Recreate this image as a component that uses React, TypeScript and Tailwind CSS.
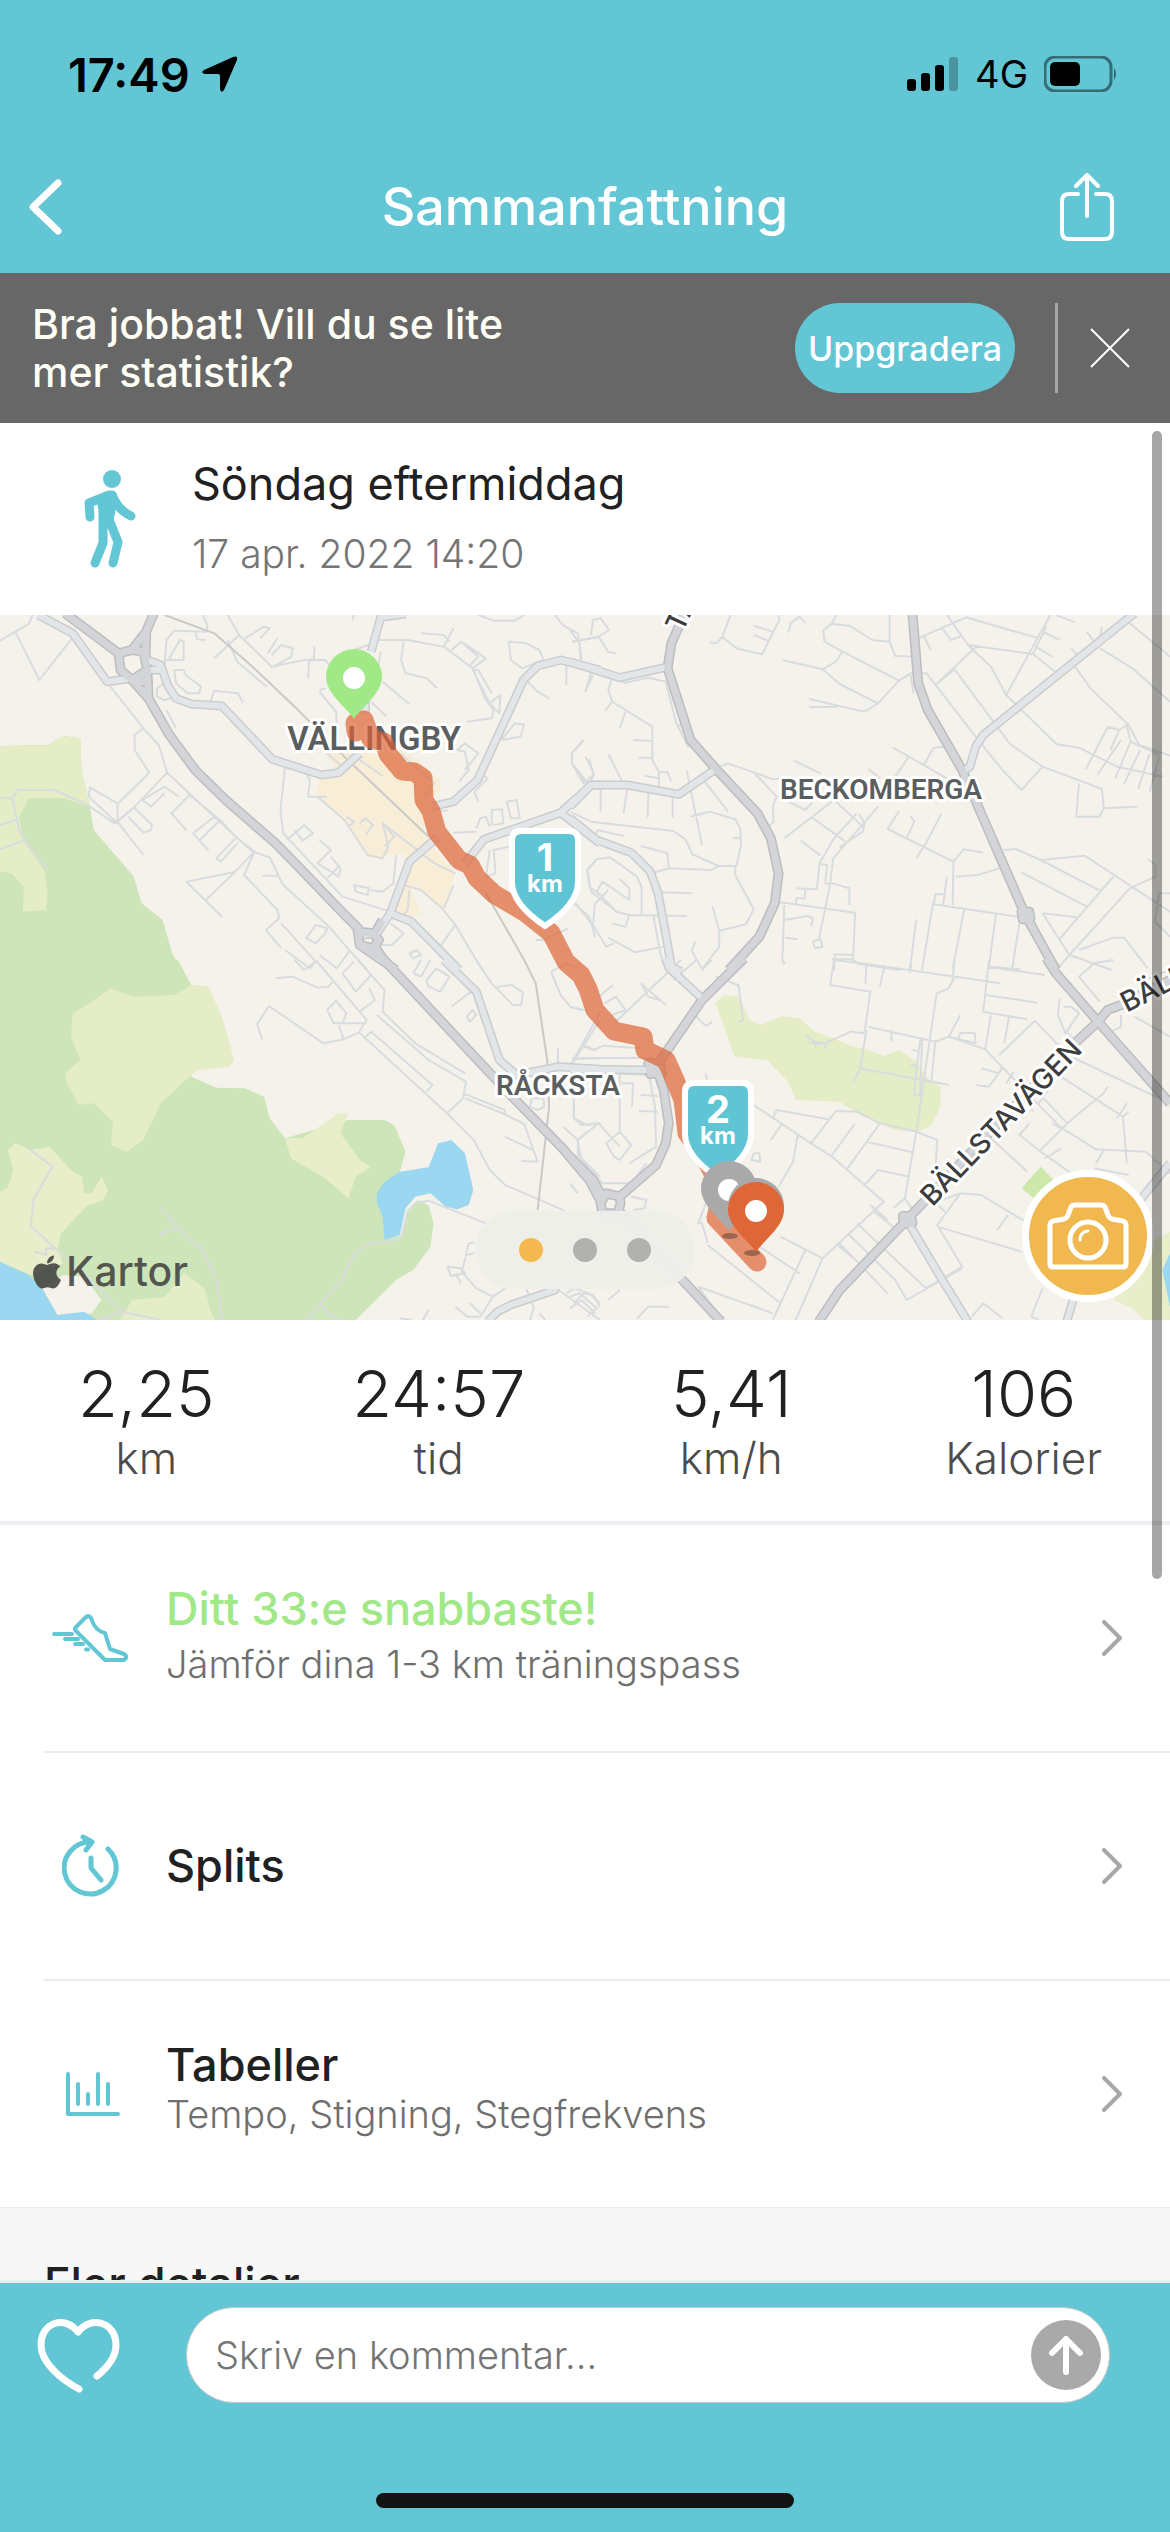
import type { ReactNode } from 'react'
import { FaApple } from 'react-icons/fa'

const MINOR = '#d9dcde'

interface Tile {
  x: number
  y: number
  minor: string
  light: string
  major: string
}

// Roads, one entry per map tile. Tile units: 1568 wide, 3 per map unit high
const TILES: Tile[] = [
  {
    x: 0,
    y: -5,
    minor:
      'M85 15L75 42L40 65L0 92 M40 65L103 210L188 85 M285 225L375 355L415 405L437 488L560 620L660 725L705 742L740 825L860 950L920 1030L960 1080 M375 355L352 375L352 420L390 488L307 582L307 640L232 560L235 532L307 580 M437 488L350 592L307 635L375 735 M0 565L32 565L47 540L140 540L225 582L300 640L350 592L397 645L395 660L375 668L335 620 M32 565L50 660L65 690L122 778 M0 645L42 630 M0 718L65 690 M372 570L430 530L467 560 M372 570L395 590L430 550 M495 555L448 610L487 660 M495 555L575 630L620 685L665 725L615 785L487 815L580 920 M560 620L505 670L545 722 M575 630L522 690 M615 685L565 745L577 755L620 700 M665 725L638 795L725 900L730 925L695 960L735 1015 M735 940L825 1055L810 1075L745 1020 M538 870L615 785 M685 797L730 797 M745 470L733 600L740 670L895 860L1020 905 M750 690L795 645L818 670L790 692L770 660 M835 690L865 720L830 760L885 800L890 775L865 740 M855 805L885 770 M925 825L965 835L960 855L930 845Z M1035 735L1028 820L1000 845L970 840 M430 165L435 90L455 62L540 65L542 45L530 15 M430 150L480 150L480 95L470 90L440 150 M455 180L480 180L485 195L525 230L520 250L490 250L460 220Z M410 260L430 270L455 262L430 220L410 235Z M435 300L460 355 M550 275L560 242L622 250L635 278 M595 15L625 75L560 145 M625 75L710 170L795 150L850 150L865 170 M680 85L705 55L690 50L640 85 M700 130L725 85 M710 135L735 105L765 115L762 140L715 170 M805 205L808 150L820 145L822 110 M595 90L620 155L697 230 M510 65L515 88L537 90 M835 240L850 235 M835 245L878 305L880 340 M925 120L975 100L990 90L1065 90L1160 110L1235 175L1270 270L1290 300L1285 325L1220 335 M1055 95L1048 150L1060 190L1115 205L1142 235 M1100 70L1160 75L1175 95 M1185 55L1160 110 M1180 120L1205 95L1250 140L1225 170 M1205 95L1270 145L1235 175 M1235 180L1250 180L1285 250 M1240 190L1280 280L1308 255L1305 310L1270 270 M1000 215L1070 283 M970 275L1010 320 M995 125L988 175 M920 30L925 15 M1250 15L1290 32L1345 32L1370 15 M1330 95L1375 100L1410 120L1420 150L1365 175L1335 150Z M1450 15L1470 45L1510 70L1520 150 M1495 95L1568 80 M1375 210L1405 245L1435 265 M1480 155L1480 225 M1545 185L1530 245 M1310 390L1345 340L1370 345L1360 380L1310 390 M1200 515L1225 480L1215 425L1195 420L1215 400L1250 430L1215 480 M1240 545L1275 505L1250 490 M1240 545L1250 575 M1525 390L1495 430L1495 460L1540 525L1552 490L1530 440 M1245 655L1255 625L1270 620L1280 650 M1285 645L1285 600L1312 598L1315 640L1290 645 M1325 575L1350 570L1358 625L1335 625Z M1145 590L1155 605L1170 600 M1185 668L1245 665 M1280 720L1270 800L1295 790L1290 720L1330 710 M1560 745L1535 780L1540 830L1568 855 M1500 880L1540 920L1555 980 M1055 825L1100 840L1155 895L1190 945L1260 1080 M1185 825L1160 895 M1070 840L1065 900L1055 915 M1190 945L1150 1010L1170 1035 M800 490L810 510L805 560L855 560 M830 560L900 630L960 735L1000 745L1015 710L1000 640L1030 680L1005 710 M940 640L955 625L975 645L955 675 M905 620L925 635L910 650 M940 450L1000 498 M855 430L905 480 M1045 430L1135 520L1110 560 M1000 640L1135 760L1190 790 M1020 940L1055 970L1025 1005L990 1005 M800 985L825 945L855 955L850 970L825 1000Z M1070 1030L1090 1020L1100 1035L1080 1045Z M1400 990L1420 990L1485 955 M835 1035L880 1075L915 1020',
    light:
      'M100 15L190 70L280 215L345 205 M385 150L420 165L440 230L460 265L500 282L580 288L712 448L840 495L885 488L940 430 M1060 12L995 22L970 125 M955 250L955 310 M1568 180L1466 150L1405 168L1368 210L1248 510L1185 575L1130 590 M1568 525L1545 525L1465 608L1265 688L1215 760 M1465 608L1568 700 M1145 680L1070 755L1020 910L985 970L950 975 M1020 910L1075 935L1200 1080 M385 180L430 180',
    major:
      'M170 10L310 130L345 120L375 125L385 180L345 210L315 180L310 130 M402 10L382 65L380 150L385 180L375 215L345 210 M382 65L345 120 M345 210L388 265L440 370L510 480L590 570L720 700L780 770L880 890L940 960 M385 180L388 265 M935 965L975 970L990 990L975 1015L940 1005Z M980 970L1000 930 M940 1005L1035 1080 M980 1010L1000 1045',
  },
  {
    x: 570,
    y: -5,
    minor:
      'M0 60L25 100L28 150 M5 95L75 80L102 60L80 25L60 30L55 75 M75 80L100 125L120 130 M60 195L40 245 M110 205L100 240L110 275L215 350L215 450L232 485L232 535 M165 390L215 393 M180 443L215 443 M195 497L232 505 M232 485L255 487L265 515 M145 305L130 355 M110 275L92 302 M250 215L205 203L145 218L135 215 M250 215L278 340L310 412 M278 345L295 348 M35 390L5 430L5 460L40 520 M5 460L35 520L62 495L50 447 M100 432L135 510 M80 533L80 605 M150 533L140 610 M205 545L203 622 M268 560L268 625 M305 482L345 705 M352 515L413 605 M420 15L398 80L383 100L365 97 M398 80L435 115L502 133L547 30L545 15 M480 47L530 65 M480 75L520 93 M570 68L578 38L600 20L615 38 M695 15L685 40L662 62L665 95L712 125L860 212 M685 42L730 47L790 90L835 95 M835 15L835 95L850 138L900 140 M712 125L695 155L660 178L555 150 M660 178L705 222L805 280L770 305L625 267 M625 292L700 290 M805 280L860 212L890 190L932 190L1060 380L1130 480L1180 540L1235 470L1150 402L1005 178L958 222 M1060 112L955 225 M890 195L898 250 M910 85L1035 22L1225 85 M985 15L1040 105L1100 170L1140 255L1255 15 M1040 105L1210 132L1268 185 M1210 132L1245 50 M970 50L995 90L1020 80 M925 80L943 120 M1140 255L1272 403L1330 413L1430 470L1550 500 M1235 470L1390 537L1395 595L1482 590 M1395 595L1383 620L1323 620L1330 520 M1235 65L1280 90 M1215 108L1260 140 M1270 15L1320 37 M1455 32L1568 140 M1385 115L1470 175L1568 275 M1320 170L1360 235L1460 345L1487 405L1568 437 M1310 115L1325 135 M1350 65L1370 95 M1390 50L1385 80 M1405 352L1348 478 M1405 350L1435 360L1455 345L1465 395L1540 435 M1435 362L1412 420 M1465 395L1425 505 M1440 390L1378 495 M1490 420L1448 522 M1515 430L1485 537 M1540 440L1515 545 M380 475L413 460L480 487L530 508L560 505 M585 452L655 490 M480 487L540 560L530 590L532 635L515 655 M570 575L615 600L635 575 M560 685L690 570L770 655 M632 622L720 695 M805 590L688 745L680 818L730 835L730 885 M690 685L652 760L645 838L590 835 M652 762L672 765L667 820L680 822L652 980L660 1010L640 1015L635 995L655 985 M748 612L690 685 M755 612L770 640L765 665L705 712 M603 692L655 737 M843 412L985 505L1010 545 M885 440L850 500 M925 465L950 413L980 410 M780 477L810 505 M970 612L935 690L905 745 M860 603L830 657L1002 755L1000 885 M880 683L900 635L890 618 M1002 755L1028 718L1080 728 M1008 800L1065 795L1130 772 M985 800L975 885 M950 885L955 853L978 853 M945 882L1180 922 M1133 720L1165 717L1230 750L1345 737L1568 905 M1230 750L1390 845 M1180 787L1350 890 M1420 800L1277 990 M1463 835L1305 1035L1415 1080 M1235 910L1325 922 M1235 910L1305 1035L1275 1075 M1330 1020L1420 983L1448 983L1510 1075 M1510 747L1530 765L1530 800L1463 835 M1568 850L1540 850L1528 935L1568 980 M1030 900L1000 1075 M1113 912L1095 1070L1175 1078 M1175 935L1155 1080 M948 885L920 1080 M905 928L888 1080 M540 875L745 908L740 1048 M560 885L555 1050L562 1062 M562 930L620 918L635 925L630 948 M562 983L595 988 M690 1080L692 1033L740 1035 M685 1048L735 1048L755 1062L860 1080 M590 880L592 865L613 865L615 838 M0 605L55 635L270 663L302 688L320 733L388 768L435 768L447 705L445 655L432 628L365 605L315 620 M388 768L370 780L258 775L215 790 M185 708L255 730L258 775 M432 768L432 795L480 898L460 943L390 962L372 888 M390 962L390 1010L345 1078L318 1022L328 995 M235 847L320 850 M140 678L72 660L62 690 M70 748L45 780L55 845L122 905L155 915L305 918 M70 748L105 742L175 800L187 830L187 912 M122 905L70 845L85 815L155 870L155 835L130 807 M100 840L65 882L60 945L95 1010L115 1000 M155 915L145 950L110 940 M15 880L55 940 M218 918L235 1025L250 1080 M245 1010L170 1027L100 983 M425 685L445 685',
    light:
      'M0 155L130 203L250 172 M0 590L55 525L150 525L285 553L380 478 M0 625L70 690L160 728L210 785L230 850L250 970L265 1070L290 1085 M1475 10L1080 375L1060 410L1045 470L1025 485',
    major:
      'M300 10L265 100L255 175L315 390L380 475L490 610L525 685L545 790L535 880L495 980L415 1080 M895 10L910 220L935 300L1025 480L1190 915L1270 1080 M1180 905L1200 905L1203 925L1183 928Z',
  },
  {
    x: 0,
    y: 345,
    minor:
      'M825 0L958 180L938 217L1168 460L1238 540L1280 630L1320 675L1475 752 M770 0L795 30L825 5 M720 55L765 50L830 83L858 80L872 62 M895 40L930 95L970 45L935 0 M895 40L925 5 M970 45L1005 90L1000 155L1085 250L1215 340 M965 85L980 120L940 155 M855 150L878 122L905 160L895 190L872 190Z M872 190L958 190 M885 195L898 238L845 250L703 138L672 192L685 238 M938 217L898 238 M985 165L1120 300L1218 365L1210 415L1168 460 M950 235L970 215L1130 375L1115 395 M1210 400L1320 450L1318 462L1215 415 M1318 462L1370 492L1405 605L1362 603 M1320 530L1392 570 M1080 40L1100 0 M1080 40L1100 50L1125 0 M1115 60L1140 25L1175 50L1150 95L1120 80Z M1180 140L1230 95 M1220 105L1235 95 M1220 170L1235 150L1245 165L1228 185Z M1290 225L1305 280 M1245 0L1285 70L1340 135L1362 135L1367 98L1338 75L1300 80 M1458 265L1458 315 M1490 320L1568 180 M1500 297L1568 295 M1525 260L1550 270L1568 262 M1390 415L1385 440L1405 450L1422 440L1420 415Z M1500 415L1500 475L1535 495L1568 490 M1472 500L1510 540L1510 585L1568 650 M1535 515L1510 540 M1120 722L1088 728L1065 755L1050 828L1025 845L970 850L925 880L890 965L800 1080 M838 1030L855 1060L890 1078 M1120 722L1270 790 M418 745L465 802L500 845L525 862L565 960L578 1065L585 1080 M418 822L465 802 M80 570L137 620L88 718L80 798L225 950L320 1055L420 1080 M90 875L120 885L120 865L140 865 M320 1055L255 1080 M1240 848L1225 850L1217 885L1240 880 M1217 890L1207 935L1245 985L1288 1010L1320 985 M1170 920L1205 925L1215 940L1178 948Z M1190 940L1205 970 M1190 1040L1222 1070L1255 1070L1288 1010 M1228 1030L1255 1060 M1120 1050L1105 1080 M1045 1075L1075 1080 M1375 985L1395 1045L1385 1080 M1460 990L1568 1080 M1480 1000L1500 985L1540 1000L1568 1030 M1500 1030L1525 1000L1550 1005L1568 1040 M1410 1060L1425 1080 M1440 35L1480 10L1500 20 M1440 35L1465 105L1490 140L1535 152',
    light:
      'M1160 0L1245 95L1305 300L1350 345L1460 320L1568 328 M1275 1085L1300 1055L1335 1035L1450 990L1455 970',
    major: 'M1000 -5L1240 290L1330 400L1470 565L1540 660L1568 720',
  },
  {
    x: 570,
    y: 345,
    minor:
      'M0 318L80 155 M5 295L215 293 M40 258L65 270L85 257L185 265 M75 110L112 75 M90 130L120 110L145 150L110 165 M115 190L290 0 M185 70L250 135 M185 70L205 110L235 120 M330 0L270 60 M345 30L370 0 M380 50L440 75L453 180L440 185 M350 120L325 165L355 198L372 185 M355 340L358 365 M480 435L630 550L685 590L820 725L660 895L550 830 M530 475L540 450L675 478 M555 490L525 540 M595 525L583 605L545 680 M630 550L695 453L750 455L805 488L905 515L960 540L955 620 M745 490L685 585 M810 490L725 625 M775 545L900 578 M770 675L805 630L885 650 M905 515L875 715L905 765 M875 715L845 745 M615 225L640 245L665 250L735 215L770 220 M620 248L665 250 M642 250L642 268 M665 250L670 268 M780 200L955 245L990 230L1085 268L1280 500L1375 568 M770 215L785 95L680 75L690 0 M775 210L758 325L990 375 M740 365L758 328 M990 375L905 355 M915 240L898 405L915 405L920 240 M955 240L945 360 M690 0L775 12L1125 70 M775 10L772 72 M822 15L810 80 M887 40L893 10 M1000 55L1005 0 M1005 50L990 85L958 100L905 515 M1090 20L1240 45 M1095 0L1080 155L1195 178 M1085 105L1222 128 M1100 165L1085 268 M1148 165L1135 250 M1215 182L1122 285 M1215 182L1300 285 M1020 165L990 230L1060 250L1058 220L1020 218L1015 235 M895 270L910 272 M890 315L910 318 M840 210L840 245 M1075 325L1120 340L1130 320 M1060 375L1095 380L1130 325 M1160 335L1140 370 M1170 350L1210 455 M1200 370L1300 490L1225 575 M1300 285L1535 412 M1225 335L1290 355L1445 470L1455 610 M1250 390L1225 430 M1300 490L1330 460L1395 400 M1395 400L1405 380 M1285 505L1260 490 M1240 595L1285 565 M1455 430L1430 475 M1200 490L1175 525L1230 575L1310 640 M1100 535L1195 635 M1375 568L1505 575L1568 640 M1395 570L1375 610 M1370 625L1460 645 M1460 455L1445 470 M1280 115L1275 165L1295 220L1330 160L1310 140L1290 140 M1300 220L1315 235 M1385 125L1330 50L1370 10L1420 0 M1440 165L1440 200L1405 220 M1475 170L1568 230 M1568 30L1500 60L1480 50 M950 730L1020 700L1075 705L1190 785 M1020 700L960 795L1025 920L930 985L750 790 M1145 765L1115 812 M960 800L1180 875 M980 755L940 715 M790 750L860 815 M785 735L830 780 M700 855L740 895 M705 850L830 1000 M730 825L850 960L880 1020L1025 925 M360 850L345 790L335 790L365 700 M360 855L550 1030 M495 860L600 940 M615 870L530 1080 M660 895L590 1080 M335 980L530 1060 M335 980L395 1075 M480 580L495 580L497 605L475 600L480 580 M10 415L10 475L30 495L75 490L130 560 M130 340L130 515 M130 340L200 345 M135 370L165 370L162 440 M185 405L230 408 M180 453L230 455 M205 335L222 440L225 560L155 610 M75 490L20 540L30 600L85 670L160 670L200 610 M130 515L95 550L115 590L130 600L160 555L130 515 M160 710L200 720L195 745L165 750 M175 1075L205 1040L260 1040 M0 1010L25 1000L70 1045L45 1070 M0 1045L30 1020L65 1060 M100 1020L130 990 M1080 1030L1050 1070 M1080 1030L1130 1075 M1205 1070L1235 985 M1205 1070L1225 1080 M555 0L560 12 M0 140L30 150 M20 700L0 670',
    light:
      'M250 -5L260 25L345 115 M0 328L215 330 M880 780L960 935L1040 1085 M1298 1085L1320 1000 M1568 610L1490 720',
    major:
      'M455 -5L345 120L225 320L245 390L258 490L250 550L225 615L130 710 M205 310L235 310L240 340L210 342Z M0 590L60 660L85 710 M130 710L95 700L80 730L85 760L125 760L132 730Z M125 750L290 955L395 1085 M1245 -5L1270 40L1380 185L1568 430 M1568 60L1440 135L1405 150L1380 185L1310 260L880 780L705 990L650 1085 M870 768L890 768L895 790L872 792Z',
  },
]

const AREAS = [
  { x: 0, y: -5, fill: '#cde5b8', pts: '0,408 125,405 165,378 210,385 213,480 235,590 245,660 350,800 370,880 425,930 450,1030 475,1085 0,1085' },
  { x: 0, y: -5, fill: '#e4edc6', pts: '0,408 125,405 165,378 210,385 213,480 235,590 165,565 75,565 50,620 60,690 115,780 125,850 120,900 60,905 62,830 30,790 0,785' },
  { x: 0, y: -5, fill: '#f8eed8', pts: '850,430 890,400 960,395 1065,425 1155,515 1150,545 1110,570 1110,680 1190,790 1160,895 1130,870 1070,825 1100,910 1070,925 1030,900 1060,790 1055,730 1010,735 1000,750 960,735 910,640 825,560 835,510 890,495' },
  { x: 0, y: 345, fill: '#cde5b8', pts: '0,0 465,0 500,75 545,80 500,350 565,383 640,385 690,410 705,475 745,535 910,480 1005,480 1030,495 1060,575 1045,635 1005,840 1050,825 1065,750 1090,720 1120,735 1133,790 1125,860 1080,930 1035,960 925,1085 0,1085' },
  { x: 0, y: 345, fill: '#e4edc6', pts: '500,75 455,105 345,110 290,85 220,140 190,160 185,230 210,300 170,340 175,370 205,435 245,430 295,485 290,555 330,575 375,540 420,430 500,345 520,330 600,320 612,300 580,170 545,80' },
  { x: 0, y: 345, fill: '#e8edca', pts: '745,535 790,535 885,460 910,460 890,520 940,600 970,620 930,650 910,715 850,655 760,595' },
  { x: 0, y: 345, fill: '#e8edca', pts: '0,695 20,685 35,630 20,570 40,550 80,570 130,560 190,635 215,650 220,700 240,700 265,650 283,690 270,720 225,740 160,820 150,870 165,910 80,945 0,905' },
  { x: 0, y: 345, fill: '#e4edc6', pts: '310,1085 345,1020 430,1010 480,940 535,985 550,1050 565,1085' },
  { x: 0, y: 345, fill: '#f5f2eb', pts: '110,985 165,945 220,950 265,1020 240,1060 150,1065' },
  { x: 0, y: 345, fill: '#9bd7f1', pts: '0,905 75,945 110,985 150,1065 220,1055 260,1085 0,1085' },
  { x: 0, y: 345, fill: '#9bd7f1', pts: '1045,635 1120,622 1145,550 1180,540 1215,580 1237,690 1225,735 1195,748 1165,740 1125,700 1085,710 1060,745 1045,825 1005,840 1000,770 985,730 985,700 1005,665' },
  { x: 570, y: 345, fill: '#e4edc6', pts: '380,130 405,105 440,110 470,180 500,195 555,168 600,175 640,215 700,240 740,260 770,265 820,288 860,270 905,305 935,355 968,380 968,440 945,495 910,515 850,510 750,460 705,425 590,420 570,365 515,300 430,290 415,240' },
  { x: 570, y: 345, fill: '#cce8ab', pts: '1180,685 1230,620 1290,690 1240,740' },
  { x: 570, y: 345, fill: '#e8edca', pts: '1420,1020 1515,850 1568,815 1568,1085 1505,1085 1470,1045' },
  { x: 570, y: 345, fill: '#9bd7f1', pts: '1568,880 1548,930 1568,1040' },
]

const ROUTE =
  'M356 117L355 108L364 105L371 124L384 127L388 139L402 156L414 157L423 163L424 185L431 196L437 217L459 245L470 250L477 263L494 279L526 298L551 318L566 347L581 360L588 374L595 395L614 416L643 422L645 435L666 445L675 465L683 485L687 518L706 545L722 575L716 603L757 647'

const toMap = (x: number, y: number) => `translate(${x} ${y}) scale(0.38265 0.33333)`

function Line({ d, color, width }: { d: string; color: string; width: number }) {
  return (
    <path
      d={d}
      fill="none"
      stroke={color}
      strokeWidth={width}
      strokeLinejoin="round"
      vectorEffect="non-scaling-stroke"
    />
  )
}

function Pin({ x, y, color }: { x: number; y: number; color: string }) {
  return (
    <g transform={`translate(${x} ${y})`}>
      <path d="M0 0C-5 -9 -28 -25 -28 -42A28 28 0 0 1 28 -42C28 -25 5 -9 0 0Z" fill={color} />
      <circle cy="-41" r="11" fill="#fff" />
    </g>
  )
}

function KmShield({ x, y, km }: { x: number; y: number; km: number }) {
  return (
    <g transform={`translate(${x} ${y})`}>
      <path
        d="M-24 3H24Q33 3 33 12V54C33 74 12 90 0 98C-12 90 -33 74 -33 54V12Q-33 3 -24 3Z"
        fill="#5fc5d5"
        stroke="#fff"
        strokeWidth="6"
      />
      <text y="43" textAnchor="middle" fill="#fff" className="font-['Inter',sans-serif] text-[38px] font-bold">
        {km}
      </text>
      <text y="64" textAnchor="middle" fill="#fff" className="font-['Inter',sans-serif] text-[24px] font-bold">
        km
      </text>
    </g>
  )
}

function RouteMap() {
  const label = "font-['Roboto',sans-serif] font-semibold"
  return (
    <svg viewBox="0 0 1170 705" className="block w-full" role="img" aria-label="Karta">
      <rect width="1170" height="705" fill="#f5f2eb" />
      {AREAS.map((a, i) => (
        <polygon key={i} points={a.pts} fill={a.fill} transform={toMap(a.x, a.y)} />
      ))}
      {TILES.map((t, i) => (
        <g key={i} transform={toMap(t.x, t.y)}>
          <Line d={t.minor} color={MINOR} width={2} />
        </g>
      ))}
      <g transform={toMap(0, -5)}>
        <Line
          d="M430 15L560 70L660 170L770 290L900 440L1120 680 M1270 850L1310 930L1370 1050L1400 1120L1430 1350L1435 1490L1405 1800"
          color="#c9c9c8"
          width={2}
        />
      </g>
      {TILES.map((t, i) => (
        <g key={i} transform={toMap(t.x, t.y)}>
          <Line d={t.light} color="#cbccce" width={9} />
        </g>
      ))}
      {TILES.map((t, i) => (
        <g key={i} transform={toMap(t.x, t.y)}>
          <Line d={t.major} color="#bcbdbf" width={10} />
        </g>
      ))}
      {TILES.map((t, i) => (
        <g key={i} transform={toMap(t.x, t.y)}>
          <Line d={t.light} color="#e3e6e9" width={6} />
          <Line d={t.major} color="#d3d5d8" width={7} />
        </g>
      ))}

      <g stroke="#fff" strokeWidth="6" strokeLinejoin="round" paintOrder="stroke" textAnchor="middle">
        <g fill="#5b5e5f">
          <text x="374" y="135" className={`${label} text-[33px]`}>VÄLLINGBY</text>
          <text x="881" y="184" className={`${label} text-[28px]`}>BECKOMBERGA</text>
          <text x="558" y="480" className={`${label} text-[28px]`}>RÅCKSTA</text>
        </g>
        <g fill="#3d3d3d" className="font-['Inter',sans-serif] text-[28px] font-medium">
          <text transform="translate(1008 514) rotate(-46)">BÄLLSTAVÄGEN</text>
          <text transform="translate(1158 382) rotate(-27)">BÄLL</text>
          <text transform="translate(690 2) rotate(-65)">TÄ</text>
        </g>
      </g>

      <path
        d={ROUTE}
        fill="none"
        stroke="#dd6436"
        strokeOpacity="0.7"
        strokeWidth="19"
        strokeLinecap="round"
        strokeLinejoin="round"
      />
      <KmShield x={545} y={213} km={1} />
      <KmShield x={718} y={465} km={2} />
      <g fill="#6b4a3c" opacity="0.6">
        <ellipse cx="730" cy="621" rx="8" ry="3" />
        <ellipse cx="752" cy="638" rx="8" ry="3" />
      </g>
      <Pin x={354} y={104} color="#a1e887" />
      <Pin x={729} y={616} color="#a9a9a9" />
      <Pin x={756} y={633} color="#a9a9a9" />
      <Pin x={756} y={637} color="#df6637" />
    </svg>
  )
}

function StatusBar() {
  return (
    <div className="flex h-[148px] items-center justify-between pr-13 pl-17 font-['Inter',sans-serif] text-black">
      <div className="flex items-center gap-3">
        <span className="text-[47px] leading-none font-semibold">17:49</span>
        <svg width="36" height="36" viewBox="0 0 36 36" aria-hidden="true">
          <path d="M31 1Q36 -1 35 4L22 34Q19 38 18 33V20Q18 18 16 18H3Q-2 17 2 14Z" />
        </svg>
      </div>
      <div className="flex items-center gap-4">
        <svg width="52" height="34" viewBox="0 0 52 34" aria-hidden="true">
          <rect y="22" width="9" height="12" rx="3" />
          <rect x="14" y="16" width="9" height="18" rx="3" />
          <rect x="28" y="8" width="9" height="26" rx="3" />
          <rect x="42" width="9" height="34" rx="3" opacity="0.25" />
        </svg>
        <span className="text-[38px] leading-none">4G</span>
        <svg width="74" height="36" viewBox="0 0 74 36" aria-hidden="true">
          <rect x="1" y="1" width="66" height="34" rx="10" fill="none" stroke="#000" strokeOpacity="0.45" strokeWidth="3" />
          <rect x="6" y="6" width="30" height="24" rx="5" />
          <path d="M70 12Q74 18 70 24Z" opacity="0.5" />
        </svg>
      </div>
    </div>
  )
}

const ShoeIcon = () => (
  <svg width="76" height="48" viewBox="0 0 76 48" fill="none" stroke="#62c6d5" strokeWidth="4" strokeLinecap="round" strokeLinejoin="round">
    <path d="M24 13L34 3Q37 1 39 4Q43 17 53 19L58 35L72 40Q75 42 74 44L72 46H53L24 17Q22 15 24 13Z" />
    <path d="M2 20H20 M13 25H26 M23 30H31 M34 35.500H36" />
  </svg>
)

const SplitsIcon = () => (
  <svg width="58" height="64" viewBox="0 0 58 64" fill="none" stroke="#62c6d5" strokeWidth="5" strokeLinecap="round" strokeLinejoin="round">
    <path d="M46 15A26 26 0 1 1 30 8M21 3L30 8L24 16M29 24V34L39 46" />
  </svg>
)

const ChartIcon = () => (
  <svg width="54" height="44" viewBox="0 0 54 44" fill="none" stroke="#62c6d5" strokeWidth="4" strokeLinecap="round" strokeLinejoin="round">
    <path d="M2 2V42H52M12 12V32M22 22V32M32 2V32M42 12V32" />
  </svg>
)

function WalkIcon() {
  return (
    <svg width="52" height="98" viewBox="0 0 52 98" fill="none" stroke="#62c6d5" strokeLinecap="round" strokeLinejoin="round" aria-hidden="true">
      <circle cx="28" cy="9" r="9" fill="#62c6d5" stroke="none" />
      <path d="M14 31Q22 18 32 24Q32 35 29 48L17 50Z" fill="#62c6d5" strokeWidth="2" />
      <path d="M25 25L5 33L6 47M28 25Q34 40 47 46" strokeWidth="9" />
      <path d="M19 42V73L11 93M22 42L34 72L29 93" strokeWidth="9" />
    </svg>
  )
}

const Chevron = () => (
  <svg width="20" height="36" viewBox="0 0 20 36" fill="none" stroke="#a8a8a8" strokeWidth="4" strokeLinecap="round" strokeLinejoin="round" aria-hidden="true">
    <path d="M2 2L18 18L2 34" />
  </svg>
)

interface RowProps {
  icon: ReactNode
  title: string
  sub?: string
  highlight?: boolean
}

function Row({ icon, title, sub, highlight }: RowProps) {
  return (
    <li className="border-b-2 border-[#ececec] last:border-b-0">
      <a href="#" className="flex h-[226px] items-center pr-12">
        <span className="flex w-[122px] shrink-0 justify-start">{icon}</span>
        <span className={`flex flex-1 flex-col ${sub ? 'pb-2' : ''}`}>
          <span
            className={`text-[45px] font-medium ${highlight ? 'leading-[60px] text-[#a1e887]' : 'leading-[48px] text-[#212121]'}`}
          >
            {title}
          </span>
          {sub && <span className="text-[38px] leading-[50px] font-light text-[#6f6f6f]">{sub}</span>}
        </span>
        <Chevron />
      </a>
    </li>
  )
}

const STATS = [
  { value: '2,25', unit: 'km' },
  { value: '24:57', unit: 'tid' },
  { value: '5,41', unit: 'km/h' },
  { value: '106', unit: 'Kalorier' },
]

export default function App() {
  return (
    <div className="flex h-screen flex-col bg-white font-['Inter',sans-serif] text-[#212121]">
      <header className="shrink-0 bg-[#62c6d5] text-white">
        <StatusBar />
        <div className="flex h-[125px] items-center justify-between pr-14 pb-2 pl-7">
          <button aria-label="Tillbaka" className="flex w-[82px]">
            <svg width="34" height="56" viewBox="0 0 34 56" fill="none" stroke="currentColor" strokeWidth="7" strokeLinecap="round" strokeLinejoin="round">
              <path d="M30 4L5 28L30 52" />
            </svg>
          </button>
          <h1 className="text-[52px] leading-none font-medium">Sammanfattning</h1>
          <button aria-label="Dela">
            <svg width="54" height="68" viewBox="0 0 54 68" fill="none" stroke="currentColor" strokeWidth="4" strokeLinecap="round" strokeLinejoin="round">
              <path d="M18 21H9Q2 21 2 28V59Q2 66 9 66H45Q52 66 52 59V28Q52 21 45 21H36M27 43V3M16 13L27 2L38 13" />
            </svg>
          </button>
        </div>
      </header>

      <section className="flex h-[150px] shrink-0 items-center bg-[#676767] pr-10 pl-8 text-[#fffff5]">
        <p className="w-[510px] text-[41px] leading-[48px] font-medium">Bra jobbat! Vill du se lite mer statistik?</p>
        <button className="ml-auto h-[90px] w-[220px] rounded-full bg-[#62c6d5] text-[34px] font-medium text-white">
          Uppgradera
        </button>
        <span className="ml-10 h-[90px] w-[3px] bg-[#a5a5a5]" />
        <button aria-label="Stäng" className="ml-8">
          <svg width="40" height="40" viewBox="0 0 40 40" stroke="#fff" strokeWidth="2">
            <path d="M1 1L39 39M39 1L1 39" />
          </svg>
        </button>
      </section>

      <main className="relative min-h-0 flex-1 overflow-hidden">
        <section className="flex h-[192px] items-center pl-[84px]">
          <div className="w-[108px] shrink-0">
            <WalkIcon />
          </div>
          <div>
            <h2 className="text-[45px] leading-[70px]">Söndag eftermiddag</h2>
            <p className="text-[39px] leading-[70px] font-light text-[#757575]">17 apr. 2022 14:20</p>
          </div>
        </section>

        <section className="relative">
          <RouteMap />
          <div className="absolute bottom-7 left-7 flex items-center font-['Inter',sans-serif] text-[41px] leading-none font-medium text-[#3c3c3c]/85">
            <FaApple className="size-[38px]" />
            <span>Kartor</span>
          </div>
          <div className="absolute bottom-[31px] left-1/2 flex h-[78px] w-[220px] -translate-x-1/2 items-center justify-center gap-[30px] rounded-full bg-[#eeeeea]/95">
            <button aria-label="Sida 1" className="size-6 rounded-full bg-[#f5b851]" />
            <button aria-label="Sida 2" className="size-6 rounded-full bg-[#b1b1af]" />
            <button aria-label="Sida 3" className="size-6 rounded-full bg-[#b1b1af]" />
          </div>
          <button
            aria-label="Lägg till bild"
            className="absolute right-4 bottom-[18px] flex size-[132px] items-center justify-center rounded-full border-[7px] border-white bg-[#f1b850]"
          >
            <svg width="82" height="68" viewBox="0 0 82 68" fill="none" stroke="#fff" strokeWidth="5" strokeLinecap="round" strokeLinejoin="round">
              <path d="M6 19L17 17Q20 16 21 13L24 5Q25 3 28 3H54Q57 3 58 5L61 13Q62 16 65 17L76 19Q79 20 79 23V62Q79 65 76 65H6Q3 65 3 62V23Q3 20 6 19Z" />
              <circle cx="41" cy="38" r="18" />
              <path d="M33 38Q33 30 41 29" strokeWidth="3" />
            </svg>
          </button>
        </section>

        <section className="grid h-[205px] grid-cols-4 border-b-4 border-[#efeff3] pt-9 text-center">
          {STATS.map(s => (
            <div key={s.unit}>
              <div className="text-[65px] leading-[76px] font-light">{s.value}</div>
              <div className="text-[44px] leading-[52px] font-light text-[#4c4c4c]">{s.unit}</div>
            </div>
          ))}
        </section>

        <ul className="ml-11">
          <Row icon={<span className="ml-2"><ShoeIcon /></span>} title="Ditt 33:e snabbaste!" sub="Jämför dina 1-3 km träningspass" highlight />
          <Row icon={<span className="ml-[18px]"><SplitsIcon /></span>} title="Splits" />
          <Row icon={<span className="ml-[22px]"><ChartIcon /></span>} title="Tabeller" sub="Tempo, Stigning, Stegfrekvens" />
        </ul>

        <section className="border-t border-[#ececec] bg-[#f7f7f7] px-11 pt-[50px] pb-12">
          <h2 className="text-[45px] leading-[52px] font-medium">Fler detaljer</h2>
        </section>

        <div className="absolute top-2 right-2 h-[1148px] w-[10px] rounded-full bg-black/35" />
      </main>

      <footer className="shrink-0 border-t-3 border-[#ececec] bg-[#62c6d5]">
        <div className="flex items-center gap-[66px] pt-6 pr-[60px] pl-9">
          <button aria-label="Gilla">
            <svg width="84" height="76" viewBox="0 0 84 76" fill="none" stroke="#fff" strokeWidth="7" strokeLinecap="round" strokeLinejoin="round">
              <path d="M61 59C72 50 80 39 80 28C80 5 55 -2 42 15C29 -2 5 5 5 28C5 46 26 63 43 72" />
            </svg>
          </button>
          <form className="flex h-[96px] flex-1 items-center rounded-full border border-[#c9c9c9] bg-white pr-2 pl-7">
            <input
              aria-label="Kommentar"
              placeholder="Skriv en kommentar..."
              className="min-w-0 flex-1 bg-transparent text-[38px] font-light outline-none placeholder:text-[#757575]"
            />
            <button type="button" aria-label="Skicka" className="flex size-[70px] items-center justify-center rounded-full bg-[#a9a9a9]">
              <svg width="36" height="40" viewBox="0 0 36 40" fill="none" stroke="#fff" strokeWidth="6" strokeLinecap="round" strokeLinejoin="round">
                <path d="M18 37V4M4 18L18 4L32 18" />
              </svg>
            </button>
          </form>
        </div>
        <div className="mx-auto mt-[90px] mb-6 h-[15px] w-[418px] rounded-full bg-[#141414]" />
      </footer>
    </div>
  )
}
